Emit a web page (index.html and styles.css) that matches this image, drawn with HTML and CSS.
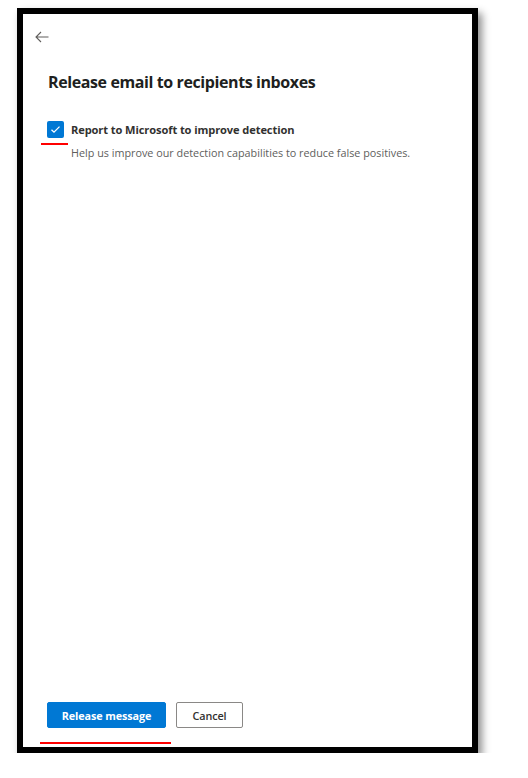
FILE: index.html
```html
<!DOCTYPE html>
<html lang="en">
<head>
<meta charset="utf-8">
<title>Release email</title>
<link rel="stylesheet" href="styles.css">
</head>
<body>
<div class="stage">
  <div class="frame">
    <div class="panel">
      <button class="back" aria-label="Back">
        <svg width="14" height="12" viewBox="0 0 14 12"><path d="M6 1 L1 6 L6 11 M1 6 H13.5" fill="none" stroke="#605e5c" stroke-width="1.1"/></svg>
      </button>
      <h1 class="title">Release email to recipients inboxes</h1>
      <div class="option">
        <div class="check-col">
          <span class="checkbox">
            <svg width="11" height="9" viewBox="0 0 11 9"><path d="M1.5 4.8 L4 7.2 L9.5 1.6" fill="none" stroke="#fff" stroke-width="1.3"/></svg>
          </span>
          <span class="mark mark-small"></span>
        </div>
        <div class="option-text">
          <div class="label">Report to Microsoft to improve detection</div>
          <div class="desc">Help us improve our detection capabilities to reduce false positives.</div>
        </div>
      </div>
      <div class="spacer"></div>
      <div class="footer">
        <div class="buttons">
          <button class="btn primary">Release message</button>
          <button class="btn secondary">Cancel</button>
        </div>
        <span class="mark mark-wide"></span>
      </div>
    </div>
  </div>
</div>
</body>
</html>
```

FILE: styles.css
```css
* { box-sizing: border-box; }
html, body { margin: 0; padding: 0; background: #fff; }
body { font-family: "Open Sans", "Noto Sans", sans-serif; color: #323130; }

.stage { padding: 8px 0 0 17px; }

.frame {
  width: 461px;
  height: 745px;
  border: 6px solid #000;
  background: #fff;
  box-shadow: 4px 5px 8px rgba(0,0,0,0.45);
}

.panel {
  height: 100%;
  display: flex;
  flex-direction: column;
  padding: 17px 0 0 12px;
}

.back {
  align-self: flex-start;
  background: none;
  border: 0;
  padding: 0;
  width: 14px;
  height: 12px;
  display: flex;
}

.title {
  margin: 28px 0 0 13px;
  font-size: 16px;
  font-weight: 700;
  letter-spacing: -0.4px;
  color: #201f1e;
  line-height: 22px;
}

.option {
  display: flex;
  margin: 28px 0 0 5px;
}

.check-col {
  display: flex;
  flex-direction: column;
  align-items: flex-start;
  width: 31px;
}

.checkbox {
  width: 17px;
  height: 17px;
  border-radius: 2px;
  background: #0078d4;
  display: flex;
  align-items: center;
  justify-content: center;
  margin-left: 7px;
}

.mark { display: block; background: #ff0000; height: 2px; }
.mark-small { width: 27px; margin-top: 5px; margin-left: 1px; }

.label {
  font-size: 11.1px;
  font-weight: 700;
  letter-spacing: -0.1px;
  line-height: 17px;
  color: #323130;
}

.desc {
  margin-top: 7px;
  font-size: 10.8px;
  line-height: 15px;
  color: #605e5c;
}

.spacer { flex: 1; }

.footer {
  display: flex;
  flex-direction: column;
  padding: 0 0 3px 5px;
}

.buttons { display: flex; gap: 10px; margin-left: 7px; }

.btn {
  height: 26px;
  border-radius: 2px;
  font-family: inherit;
  font-size: 10.8px;
  font-weight: 700;
  letter-spacing: -0.1px;
  padding: 0;
}

.primary {
  width: 119px;
  background: #0078d4;
  border: 1px solid #0078d4;
  color: #fff;
}

.secondary {
  width: 67px;
  background: #fff;
  border: 1px solid #8a8886;
  color: #323130;
  font-weight: 600;
}

.mark-wide { width: 131px; margin-top: 14px; }
```
